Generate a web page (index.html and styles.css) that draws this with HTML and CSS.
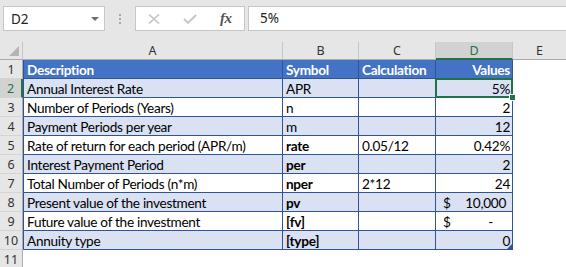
FILE: index.html
```html
<!DOCTYPE html>
<html>
<head>
<meta charset="utf-8">
<link rel="stylesheet" href="styles.css">
</head>
<body>
<div class="app">
  <div class="toolbar">
    <div class="namebox"><span>D2</span><span class="caret"></span></div>
    <div class="dots"><i></i><i></i><i></i></div>
    <div class="fxbox">
      <svg class="ico" width="12" height="10" viewBox="0 0 12 10"><path d="M1 0.5 L11 9.5 M11 0.5 L1 9.5" stroke="#c4c4c4" stroke-width="1.6" fill="none"/></svg>
      <svg class="ico" width="14" height="10" viewBox="0 0 14 10"><path d="M1 5 L5 9 L13 1" stroke="#c4c4c4" stroke-width="1.8" fill="none"/></svg>
      <span class="fx">fx</span>
    </div>
    <div class="formula">5%</div>
  </div>
  <div class="sheet">
    <div class="corner"><span class="tri"></span></div>
    <div class="colh">A</div>
    <div class="colh">B</div>
    <div class="colh">C</div>
    <div class="colh sel">D</div>
    <div class="colh last">E</div>

    <div class="rowh">1</div>
    <div class="c hd first">Description</div>
    <div class="c hd">Symbol</div>
    <div class="c hd">Calculation</div>
    <div class="c hd r">Values</div>
    <div class="e"></div>

    <div class="rowh sel">2</div>
    <div class="c band first">Annual Interest Rate</div>
    <div class="c band">APR</div>
    <div class="c band"></div>
    <div class="c band r active">5%<span class="handle"></span></div>
    <div class="e"></div>

    <div class="rowh">3</div>
    <div class="c first">Number of Periods (Years)</div>
    <div class="c">n</div>
    <div class="c"></div>
    <div class="c r">2</div>
    <div class="e"></div>

    <div class="rowh">4</div>
    <div class="c band first">Payment Periods per year</div>
    <div class="c band">m</div>
    <div class="c band"></div>
    <div class="c band r">12</div>
    <div class="e"></div>

    <div class="rowh">5</div>
    <div class="c first">Rate of return for each period (APR/m)</div>
    <div class="c b">rate</div>
    <div class="c">0.05/12</div>
    <div class="c r">0.42%</div>
    <div class="e"></div>

    <div class="rowh">6</div>
    <div class="c band first">Interest Payment Period</div>
    <div class="c band b">per</div>
    <div class="c band"></div>
    <div class="c band r">2</div>
    <div class="e"></div>

    <div class="rowh">7</div>
    <div class="c first">Total Number of Periods (n*m)</div>
    <div class="c b">nper</div>
    <div class="c">2*12</div>
    <div class="c r">24</div>
    <div class="e"></div>

    <div class="rowh">8</div>
    <div class="c band first">Present value of the investment</div>
    <div class="c band b">pv</div>
    <div class="c band"></div>
    <div class="c band acc"><span>$</span><span>10,000</span></div>
    <div class="e"></div>

    <div class="rowh">9</div>
    <div class="c first">Future value of the investment</div>
    <div class="c b">[fv]</div>
    <div class="c"></div>
    <div class="c acc"><span>$</span><span class="dash">-</span></div>
    <div class="e"></div>

    <div class="rowh">10</div>
    <div class="c band first">Annuity type</div>
    <div class="c band b">[type]</div>
    <div class="c band"></div>
    <div class="c band r">0<span class="tblhandle"></span></div>
    <div class="e"></div>

    <div class="rowh">11</div>
    <div class="e"></div>
    <div class="e"></div>
    <div class="e"></div>
    <div class="e"></div>
    <div class="e"></div>
  </div>
</div>
</body>
</html>
```

FILE: styles.css
```css
* { box-sizing: border-box; }
html, body { margin: 0; padding: 0; background: #ffffff; }
.app { width: 566px; height: 267px; overflow: hidden; font-family: "Noto Sans", sans-serif; }

.toolbar {
  height: 42px;
  background: #e6e6e6;
  display: flex;
  align-items: flex-start;
  padding-top: 6px;
  padding-left: 3px;
}
.namebox {
  width: 102px; height: 25px;
  background: #fff;
  border: 1px solid #c6c6c6;
  display: flex; align-items: center; justify-content: space-between;
  padding: 0 5px 0 7px;
  font-size: 13.5px; color: #222;
}
.caret {
  width: 0; height: 0;
  border-left: 4px solid transparent;
  border-right: 4px solid transparent;
  border-top: 4px solid #6d6d6d;
}
.dots {
  width: 30px; height: 25px;
  display: flex; flex-direction: column; align-items: center; justify-content: center; gap: 2px;
}
.dots i { display: block; width: 2px; height: 2px; background: #a8a8a8; }
.fxbox {
  width: 110px; height: 25px;
  background: #fff;
  border: 1px solid #c6c6c6;
  display: flex; align-items: center;
  padding-left: 12px;
}
.fxbox .ico:nth-child(1) { margin-right: 23px; }
.fxbox .ico:nth-child(2) { margin-right: 23px; }
.fx {
  font-family: "Liberation Serif", serif; font-style: italic; font-size: 15px; color: #555;
  letter-spacing: -0.5px; font-weight: bold;
}
.formula {
  flex: 1; height: 25px; margin-left: 3px;
  background: #fff;
  border: 1px solid #c6c6c6; border-right: none;
  padding-left: 11px;
  font-size: 13.5px; color: #222; line-height: 23px;
}

.sheet {
  display: grid;
  grid-template-columns: 23px 260px 76px 77px 77px 53px;
  grid-template-rows: 18px;
  grid-auto-rows: 19px;
}
.corner {
  background: #e6e6e6;
  border-right: 1px solid #c6c6c6;
  border-bottom: 1px solid #ababab;
  position: relative;
}
.tri {
  position: absolute; right: 3px; bottom: 3px;
  width: 0; height: 0;
  border-left: 10px solid transparent;
  border-bottom: 10px solid #b4b4b4;
}
.colh {
  background: #e6e6e6;
  border-right: 1px solid #c6c6c6;
  border-bottom: 1px solid #ababab;
  text-align: center;
  font-size: 12.5px; color: #333;
  line-height: 18px;
}
.colh.last { border-right: none; }
.colh.sel {
  background: #d2d2d2;
  color: #217346;
  border-bottom: 2px solid #217346;
}
.rowh {
  background: #e6e6e6;
  border-right: 1px solid #ababab;
  border-bottom: 1px solid #d4d4d4;
  text-align: center;
  font-size: 12.5px; color: #333;
  line-height: 19px;
}
.rowh.sel {
  background: #d2d2d2;
  color: #217346;
  border-right: 2px solid #217346;
}

.c {
  font-family: "Lato", sans-serif;
  font-size: 13.6px;
  letter-spacing: -0.3px;
  color: #000;
  line-height: 20px;
  padding: 0 3px;
  white-space: nowrap;
  overflow: hidden;
  border-right: 1px solid #2f5597;
  border-bottom: 1px solid #2f5597;
  background: #fff;
  position: relative;
}
.c.first { border-left: 1px solid #2f5597; padding-left: 3px; }
.c.hd { background: #4472c4; color: #fff; font-weight: bold; }
.c.band { background: #d9e1f2; }
.c.b { font-weight: bold; }
.c.r { text-align: right; padding-right: 2px; }
.c.acc { display: flex; justify-content: space-between; padding-left: 7px; padding-right: 6px; }
.c.acc .dash { padding-right: 13px; }
.c.active { overflow: visible; }
.c.active::after {
  content: "";
  position: absolute; left: -1px; top: -1px; right: -1px; bottom: -1px;
  border: 2px solid #217346;
  pointer-events: none;
}
.handle {
  position: absolute; right: -4px; bottom: -4px;
  width: 7px; height: 7px;
  background: #217346;
  border: 1px solid #fff;
  z-index: 2;
}
.tblhandle {
  position: absolute; right: 0; bottom: 0;
  width: 0; height: 0;
  border-left: 5px solid transparent;
  border-bottom: 5px solid #2f5597;
}
.e { background: #fff; }
```
